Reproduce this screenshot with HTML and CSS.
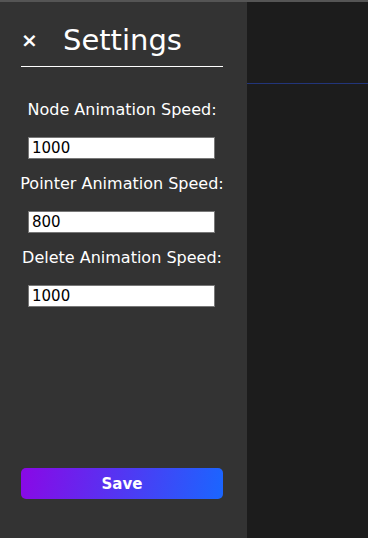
FILE: index.html
```html
<!DOCTYPE html>
<html lang="en">
<head>
    <meta charset="UTF-8">
    <meta name="viewport" content="width=device-width, initial-scale=1.0">
    <title>Settings</title>
    <link rel="stylesheet" href="styles.css">
</head>
<body>
    <aside class="settings-panel">
        <div class="settings-header">
            <button class="btn-close" aria-label="Close">&times;</button>
            <h1 class="settings-title">Settings</h1>
        </div>

        <div class="settings-fields">
            <div class="field">
                <label for="nodeSpeed">Node Animation Speed:</label>
                <input type="text" id="nodeSpeed" value="1000">
            </div>
            <div class="field">
                <label for="pointerSpeed">Pointer Animation Speed:</label>
                <input type="text" id="pointerSpeed" value="800">
            </div>
            <div class="field">
                <label for="deleteSpeed">Delete Animation Speed:</label>
                <input type="text" id="deleteSpeed" value="1000">
            </div>
        </div>

        <button class="btn-save">Save</button>
    </aside>

    <main class="canvas-area">
        <div class="toolbar"></div>
    </main>
</body>
</html>
```

FILE: styles.css
```css
:root {
    --panel: #333333;
    --canvas: #1c1c1c;
    --accent-line: #22357a;
    --text: #ffffff;
}

* {
    box-sizing: border-box;
}

body {
    margin: 0;
    height: 100vh;
    overflow: hidden;
    display: flex;
    border-top: 2px solid #555555;
    background: var(--canvas);
    font-family: 'DejaVu Sans', 'Open Sans', sans-serif;
    color: var(--text);
}

.settings-panel {
    width: 247px;
    flex-shrink: 0;
    background: var(--panel);
    display: flex;
    flex-direction: column;
    padding: 0 24px 39px 21px;
}

.settings-header {
    display: flex;
    align-items: center;
    height: 65px;
    padding-top: 12px;
    border-bottom: 1px solid var(--text);
}

.btn-close {
    background: none;
    border: none;
    color: var(--text);
    font-family: 'DejaVu Sans', sans-serif;
    font-size: 20px;
    font-weight: 700;
    padding: 0;
    width: 42px;
    text-align: left;
    cursor: pointer;
}

.settings-title {
    margin: 0;
    font-size: 29px;
    font-weight: 500;
}

.settings-fields {
    display: flex;
    flex-direction: column;
    gap: 15px;
    padding-top: 33px;
}

.field {
    display: flex;
    flex-direction: column;
    align-items: center;
    gap: 17px;
}

.field label {
    font-size: 16px;
    line-height: 20px;
    white-space: nowrap;
}

.field input {
    width: 187px;
    height: 22px;
    margin-left: 7px;
    align-self: flex-start;
    border: 1px solid #777777;
    padding: 0 3px;
    font-family: inherit;
    font-size: 15px;
    color: #000000;
    background: #ffffff;
}

.btn-save {
    margin-top: auto;
    height: 31px;
    border: none;
    border-radius: 5px;
    background: linear-gradient(100deg, #8a08e6, #1a66ff);
    color: var(--text);
    font-family: inherit;
    font-size: 15px;
    font-weight: 700;
    cursor: pointer;
}

.canvas-area {
    flex: 1;
}

.toolbar {
    height: 82px;
    border-bottom: 1px solid var(--accent-line);
}
```
